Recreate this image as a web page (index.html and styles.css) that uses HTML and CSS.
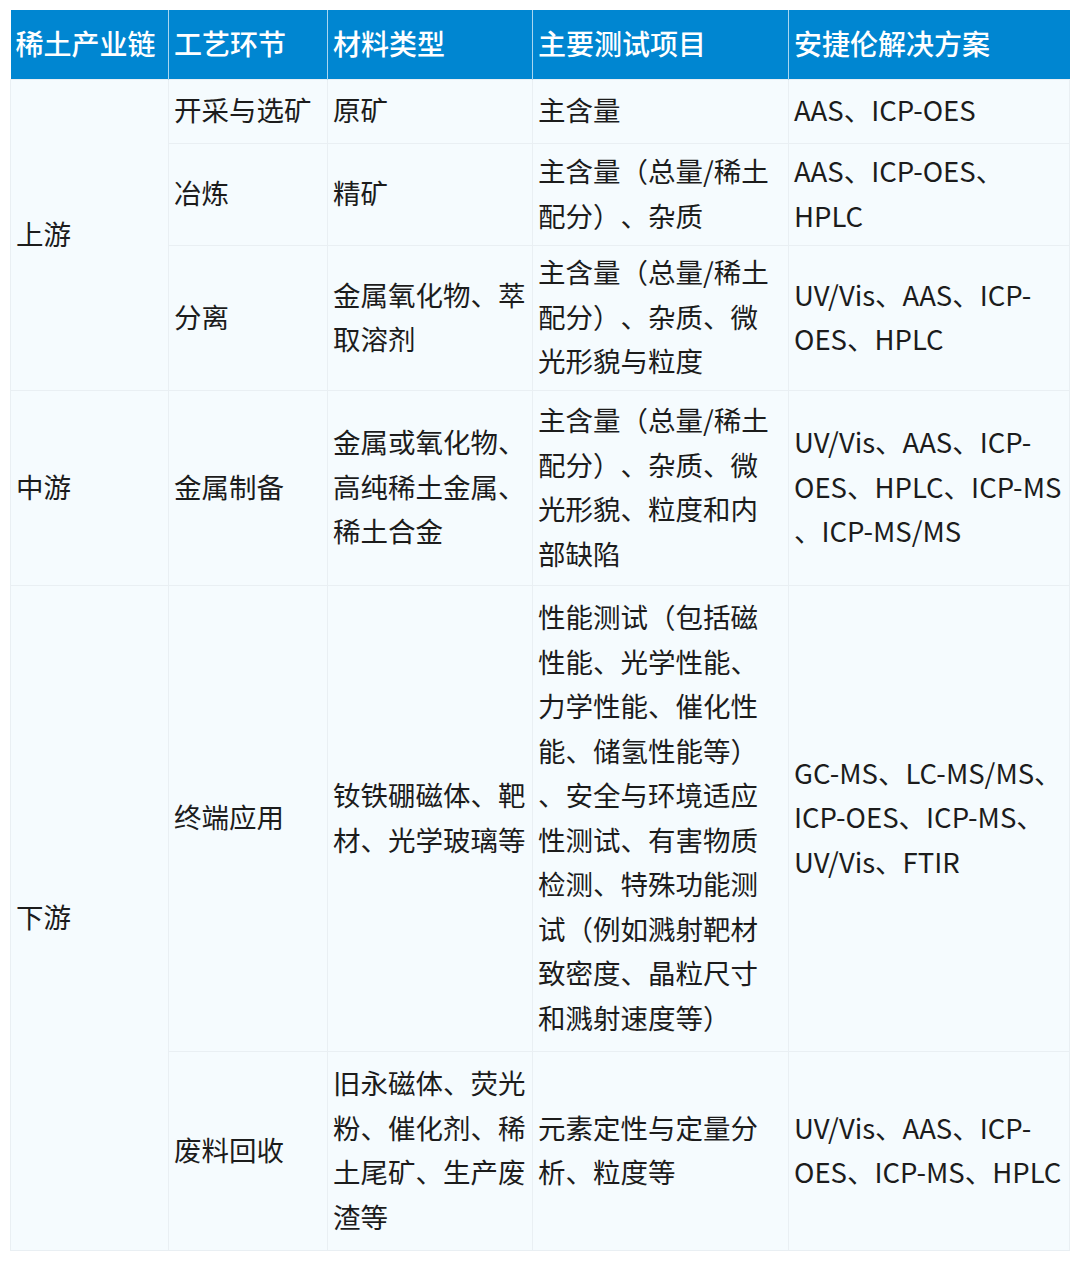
FILE: index.html
```html
<!DOCTYPE html>
<html lang="zh-CN">
<head>
<meta charset="utf-8">
<title>稀土产业链</title>
<link rel="stylesheet" href="styles.css">
</head>
<body>
<table class="chain">
  <colgroup>
    <col class="c1"><col class="c2"><col class="c3"><col class="c4"><col class="c5">
  </colgroup>
  <thead>
    <tr class="head">
      <th>稀土产业链</th>
      <th>工艺环节</th>
      <th>材料类型</th>
      <th>主要测试项目</th>
      <th>安捷伦解决方案</th>
    </tr>
  </thead>
  <tbody>
    <tr class="r1">
      <td rowspan="3">上游</td>
      <td>开采与选矿</td>
      <td>原矿</td>
      <td>主含量</td>
      <td>AAS、ICP-OES</td>
    </tr>
    <tr class="r2">
      <td>冶炼</td>
      <td>精矿</td>
      <td>主含量（总量/稀土<br>配分）、杂质</td>
      <td>AAS、ICP-OES、<br>HPLC</td>
    </tr>
    <tr class="r3">
      <td>分离</td>
      <td>金属氧化物、萃<br>取溶剂</td>
      <td>主含量（总量/稀土<br>配分）、杂质、微<br>光形貌与粒度</td>
      <td>UV/Vis、AAS、ICP-<br>OES、HPLC</td>
    </tr>
    <tr class="r4">
      <td>中游</td>
      <td>金属制备</td>
      <td>金属或氧化物、<br>高纯稀土金属、<br>稀土合金</td>
      <td>主含量（总量/稀土<br>配分）、杂质、微<br>光形貌、粒度和内<br>部缺陷</td>
      <td>UV/Vis、AAS、ICP-<br>OES、HPLC、ICP-MS<br>、ICP-MS/MS</td>
    </tr>
    <tr class="r5">
      <td rowspan="2">下游</td>
      <td>终端应用</td>
      <td>钕铁硼磁体、靶<br>材、光学玻璃等</td>
      <td>性能测试（包括磁<br>性能、光学性能、<br>力学性能、催化性<br>能、储氢性能等）<br>、安全与环境适应<br>性测试、有害物质<br>检测、特殊功能测<br>试（例如溅射靶材<br>致密度、晶粒尺寸<br>和溅射速度等）</td>
      <td>GC-MS、LC-MS/MS、<br>ICP-OES、ICP-MS、<br>UV/Vis、FTIR</td>
    </tr>
    <tr class="r6">
      <td>废料回收</td>
      <td>旧永磁体、荧光<br>粉、催化剂、稀<br>土尾矿、生产废<br>渣等</td>
      <td>元素定性与定量分<br>析、粒度等</td>
      <td>UV/Vis、AAS、ICP-<br>OES、ICP-MS、HPLC</td>
    </tr>
  </tbody>
</table>
</body>
</html>
```

FILE: styles.css
```css
html, body {
  margin: 0;
  padding: 0;
  background: #ffffff;
}

body {
  padding: 10px 0 0 10px;
  font-family: "Noto Sans CJK SC", "Noto Sans", sans-serif;
}

.chain {
  border-collapse: collapse;
  table-layout: fixed;
  width: 1059px;
  font-size: 27.5px;
  line-height: 44.5px;
  color: #1c1c1c;
  text-spacing-trim: space-all;
}

.c1 { width: 158px; }
.c2 { width: 159px; }
.c3 { width: 205px; }
.c4 { width: 256px; }
.c5 { width: 281px; }

.chain th,
.chain td {
  padding: 0 0 3px 5px;
  text-align: left;
  vertical-align: middle;
  white-space: nowrap;
  overflow: hidden;
}

.chain th {
  background: #0086d1;
  color: #ffffff;
  font-size: 28px;
  font-weight: 500;
  border-left: 1.5px solid #a9d6f0;
  padding-left: 5px;
}

.chain th:first-child {
  border-left: none;
}

.chain td {
  background: #f5fbfe;
  border: 1px solid #e9eff3;
}

.head { height: 69px; }
.r1 { height: 64px; }
.r2 { height: 102px; }
.r3 { height: 145px; }
.r4 { height: 195px; }
.r5 { height: 466px; }
.r6 { height: 199px; }
```
